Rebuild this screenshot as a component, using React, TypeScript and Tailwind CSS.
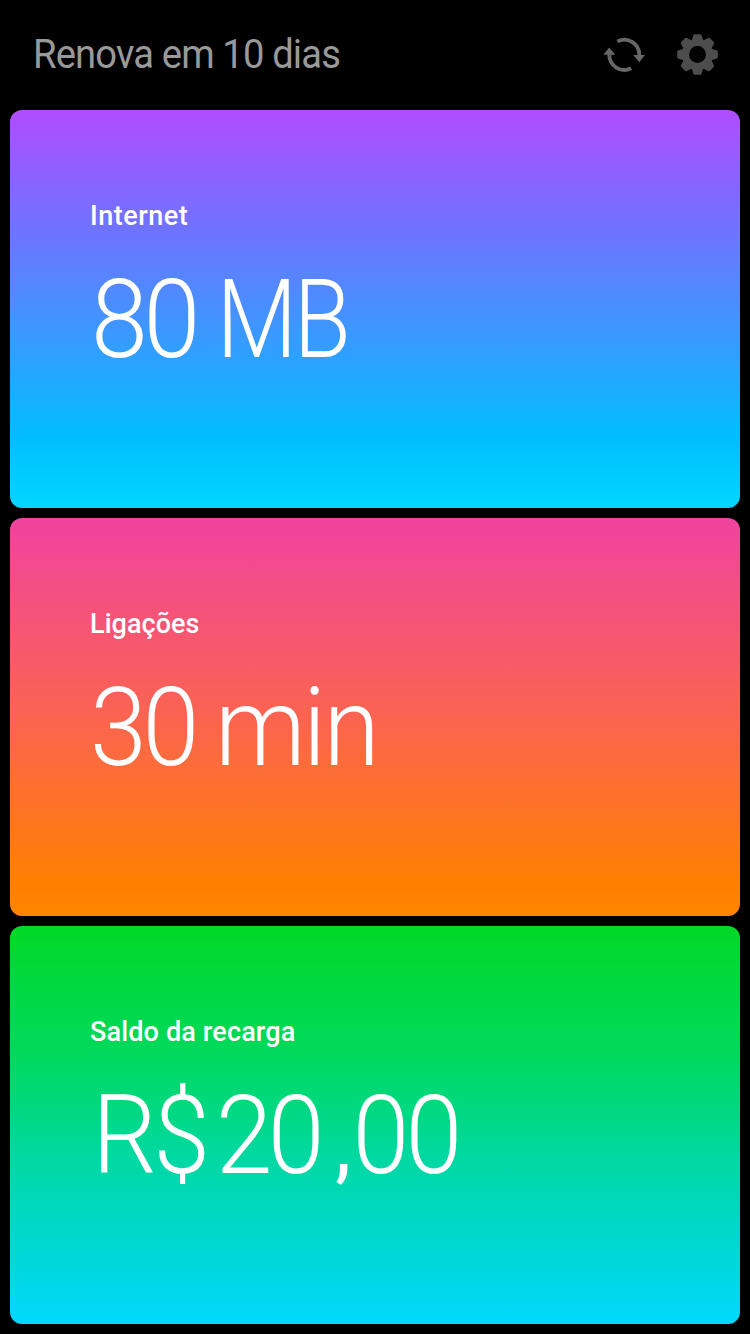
type Word = { text: string; className: string }

type Card = {
  label: string
  labelClass: string
  valueClass: string
  value: Word[]
  background: string
}

const cards: Card[] = [
  {
    label: 'Internet',
    labelClass: 'tracking-[0.5px]',
    valueClass: 'ml-px',
    value: [
      { text: '80', className: 'w-[135px] tracking-[-4.5px]' },
      { text: 'MB', className: 'origin-left scale-x-[0.91] tracking-[-4px]' },
    ],
    background: 'bg-[linear-gradient(180deg,#b04dff_0%,#756fff_27%,#4194ff_53%,#00bfff_83%,#00d7ff_100%)]',
  },
  {
    label: 'Ligações',
    labelClass: 'tracking-[0.05px]',
    valueClass: 'ml-0',
    value: [
      { text: '30', className: 'w-[134.5px] tracking-[-4.5px]' },
      { text: 'min', className: 'tracking-[-2.9px]' },
    ],
    background: 'bg-[linear-gradient(180deg,#f0439f_0%,#fb6450_50%,#ff8000_92%,#ff8500_100%)]',
  },
  {
    label: 'Saldo da recarga',
    labelClass: 'tracking-[0.15px]',
    valueClass: 'ml-[1.7px]',
    value: [
      { text: 'R$', className: 'w-[133px] tracking-[-4px]' },
      { text: '20', className: 'w-[126.5px] tracking-[-5px]' },
      { text: ',', className: 'w-[20.5px] pl-0.5 text-[76px] font-medium' },
      { text: '00', className: 'tracking-[-4px]' },
    ],
    background: 'bg-[linear-gradient(180deg,#00d926_0%,#00d95c_32%,#00d8a2_58%,#00d8ff_100%)]',
  },
]

function RefreshIcon() {
  return (
    <svg width="42" height="36" viewBox="0 0 42 36" fill="none" aria-hidden="true">
      <path d="M14.4 4.4A15 15 0 0 1 36.3 18.5" stroke="#666" strokeWidth="3.8" />
      <path d="M28.2 31.2A15 15 0 0 1 6.3 17.2" stroke="#666" strokeWidth="3.8" />
      <path d="M30.2 18H42L36.3 25.2Z" fill="#666" />
      <path d="M0.4 17.8H12.4L6.2 10.4Z" fill="#666" />
    </svg>
  )
}

const teeth = [0, 45, 90, 135, 180, 225, 270, 315]

function GearIcon() {
  return (
    <svg width="41" height="41" viewBox="-20.5 -20.5 41 41" aria-hidden="true">
      <circle r="12" fill="none" stroke="#4d4d4d" strokeWidth="7.2" />
      {teeth.map((a) => (
        <path
          key={a}
          d="M-5.8 -13.5L-4.2 -19Q-3.8 -20.3 -2.6 -20.3H2.6Q3.8 -20.3 4.2 -19L5.8 -13.5Z"
          fill="#4d4d4d"
          transform={`rotate(${a})`}
        />
      ))}
    </svg>
  )
}

function BalanceCard({ card }: { card: Card }) {
  return (
    <section className={`h-[398px] rounded-xl pl-20 pt-[88px] text-white ${card.background}`}>
      <h2 className={`h-9 whitespace-nowrap text-[27px] font-medium leading-9 ${card.labelClass}`}>{card.label}</h2>
      <p
        className={`mt-[21px] flex h-[130px] origin-left scale-x-[0.93] items-baseline whitespace-nowrap text-[110px] font-light leading-[130px] ${card.valueClass}`}
      >
        {card.value.map((w) => (
          <span key={w.text} className={`shrink-0 ${w.className}`}>
            {w.text}
          </span>
        ))}
      </p>
    </section>
  )
}

export default function App() {
  return (
    <main className="flex h-[1334px] w-[750px] flex-col overflow-hidden bg-black font-[Roboto,sans-serif]">
      <header className="flex h-[110px] shrink-0 items-center justify-between pl-[33px] pr-8">
        <h1 className="origin-left scale-x-[0.93] whitespace-nowrap text-[41px] font-normal tracking-[-0.9px] text-[#999]">
          Renova em 10 dias
        </h1>
        <div className="flex items-center gap-8 pb-px">
          <RefreshIcon />
          <GearIcon />
        </div>
      </header>
      <div className="flex flex-col gap-2.5 px-2.5">
        {cards.map((card) => (
          <BalanceCard key={card.label} card={card} />
        ))}
      </div>
    </main>
  )
}
